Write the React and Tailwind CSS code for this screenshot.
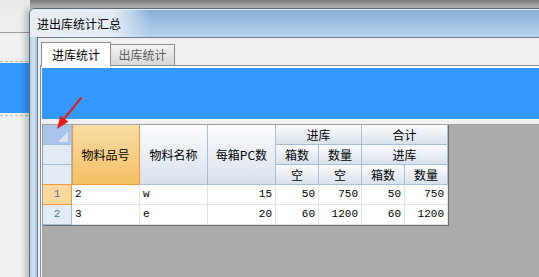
import React from 'react';

// header / grid cell styles
const hCell =
  'flex items-center justify-center border-r border-b border-[#a7bfd9] bg-gradient-to-b from-[#fbfcfe] to-[#d9e1ec] text-[12px] text-black';
const hOrange =
  'flex items-center justify-center border-r border-b border-[#f0983a] shadow-[inset_1px_0_0_#f0983a] bg-gradient-to-b from-[#fbdda6] to-[#f2c062] text-[12px] text-black';
const rowHead = 'flex items-center justify-center border-r border-b border-[#a2bad3] bg-[#e2eaf5]';
const dCell =
  "flex items-center border-r border-b border-[#e4e4e4] bg-white px-[3px] font-['Liberation_Mono',monospace] text-[11px] text-black";

const rows = [
  { n: '1', code: '2', name: 'w', pc: '15', inBox: '50', inQty: '750', sumBox: '50', sumQty: '750', active: true },
  { n: '2', code: '3', name: 'e', pc: '20', inBox: '60', inQty: '1200', sumBox: '60', sumQty: '1200' },
];

const Grid = () => (
  <div className="flex-1 bg-[#ababab] border-l border-t border-[#a0a0a0]">
    <div className="w-fit border-r border-b border-[#6c6c6c]">
      <div className="grid grid-cols-[29px_68px_68px_68px_43px_43px_43px_43px] auto-rows-[20px]">
        {/* corner */}
        <div className="relative border-r border-b border-[#a2bad3] bg-[#a9c5ea]">
          <svg className="absolute left-0 top-0" width="28" height="19" viewBox="0 0 28 19">
            <defs>
              <linearGradient id="tri" x1="0" y1="0" x2="1" y2="1">
                <stop offset="0" stopColor="#f4f6f9" />
                <stop offset="1" stopColor="#d3dbe6" />
              </linearGradient>
            </defs>
            <polygon points="25,7 25,17 15,17" fill="url(#tri)" />
          </svg>
        </div>
        <div className={`${hOrange} row-span-3`}>物料品号</div>
        <div className={`${hCell} row-span-3`}>物料名称</div>
        <div className={`${hCell} row-span-3`}>每箱PC数</div>
        <div className={`${hCell} col-span-2`}>进库</div>
        <div className={`${hCell} col-span-2`}>合计</div>

        <div className={rowHead} />
        <div className={hCell}>箱数</div>
        <div className={hCell}>数量</div>
        <div className={`${hCell} col-span-2`}>进库</div>

        <div className={rowHead} />
        <div className={hCell}>空</div>
        <div className={hCell}>空</div>
        <div className={hCell}>箱数</div>
        <div className={hCell}>数量</div>

        {rows.map((r) => (
          <React.Fragment key={r.n}>
            <div
              className={
                r.active
                  ? "flex items-center justify-center border-r border-b border-t border-[#f0983a] -mt-px bg-[#fdd89c] font-['Liberation_Mono',monospace] text-[11px] text-[#3f73b0]"
                  : "flex items-center justify-center border-r border-b border-[#a2bad3] bg-[#e2eaf5] font-['Liberation_Mono',monospace] text-[11px] text-[#3f73b0]"
              }
            >
              {r.n}
            </div>
            <div className={`${dCell} ${r.active ? 'bg-[#e9edf5]' : ''}`}>{r.code}</div>
            <div className={dCell}>{r.name}</div>
            <div className={`${dCell} justify-end`}>{r.pc}</div>
            <div className={`${dCell} justify-end`}>{r.inBox}</div>
            <div className={`${dCell} justify-end`}>{r.inQty}</div>
            <div className={`${dCell} justify-end`}>{r.sumBox}</div>
            <div className={`${dCell} justify-end`}>{r.sumQty}</div>
          </React.Fragment>
        ))}
      </div>
    </div>
  </div>
);

const Dialog = () => (
  <div className="absolute left-[29px] top-[8px] w-[540px] h-[290px] flex flex-col rounded-tl-[6px] border-l border-t border-[#5b6b7e] overflow-hidden shadow-[-4px_0_6px_rgba(0,0,0,0.22)]">
    {/* title bar */}
    <div className="h-[28px] shrink-0 flex items-center pl-[7px] border-t border-[#eef4fb] bg-[linear-gradient(to_right,#e9eef4_0px,#e3ebf4_85px,rgba(142,179,220,0)_120px),linear-gradient(to_bottom,#8ab0da,#b6d2f0)] text-[12px] text-black">
      进出库统计汇总
    </div>
    <div className="flex-1 flex">
      {/* left frame */}
      <div className="w-[7px] bg-gradient-to-r from-[#b3cbe6] via-[#d4e3f3] to-[#a9c3e2]" />
      {/* client area */}
      <div className="flex-1 flex flex-col border-l border-t border-[#6f7d8e] bg-[#f0f0f0] pt-[3px] pl-[2px]">
        {/* tabs */}
        <div className="flex items-end h-[24px] pl-[1px]">
          <div className="relative z-10 -mb-px h-[24px] w-[70px] flex items-center justify-center border-l border-t border-r border-[#898c95] bg-white text-[12px] text-black">
            进库统计
          </div>
          <div className="h-[21px] w-[64px] flex items-center justify-center border-t border-r border-[#898c95] bg-gradient-to-b from-[#f3f3f3] to-[#d8d8d8] text-[12px] text-[#5c5c5c]">
            出库统计
          </div>
        </div>
        {/* tab page */}
        <div className="flex-1 flex flex-col border-l border-t border-[#898c95] bg-white pl-[1px] pt-[2px]">
          <div className="h-[51px] bg-[#3399ff]" />
          <div className="flex-1 flex flex-col bg-[#f0f0f0] pt-[5px]">
            <Grid />
          </div>
        </div>
      </div>
    </div>
  </div>
);

const Arrow = () => (
  <svg className="absolute left-0 top-0 pointer-events-none" width="539" height="277" viewBox="0 0 539 277">
    <line x1="81" y1="98" x2="64" y2="119" stroke="#e51a1a" strokeWidth="2" strokeLinecap="round" />
    <polygon points="57,129 60.5,115.5 68.3,121.7" fill="#e51a1a" />
  </svg>
);

export default function App() {
  return (
    <div className="relative w-[539px] h-[277px] overflow-hidden bg-[#f0f0f0] font-['Noto_Sans_CJK_SC','Noto_Sans',sans-serif]">
      {/* window behind */}
      <div className="flex flex-col">
        <div className="flex h-[9px]">
          <div className="w-[30px] bg-[#e9e9e9]" />
          <div className="flex-1 bg-gradient-to-b from-[#737373] via-[#a3a3a3] to-[#c8c8c8]" />
        </div>
        <div className="h-[24px] border-b border-[#9a9a9a] bg-[#ededed]" />
        <div className="h-[28px] bg-[#f0f0f0]" />
        <div className="border-t border-b border-dashed border-[#b9b9b9] py-[1px] pb-[2px]">
          <div className="h-[50px] bg-[#3399ff]" />
        </div>
      </div>
      <Dialog />
      <Arrow />
    </div>
  );
}
